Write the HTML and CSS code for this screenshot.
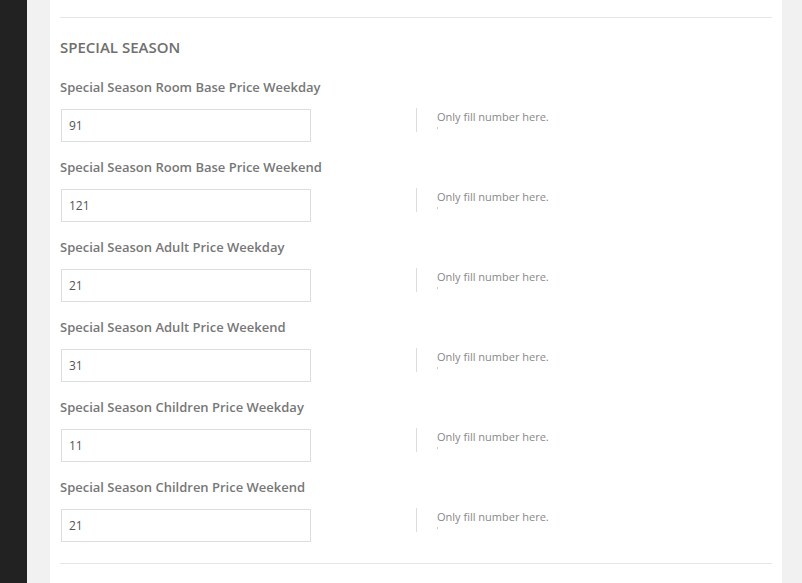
FILE: index.html
```html
<!DOCTYPE html>
<html>
<head>
<meta charset="utf-8">
<link rel="stylesheet" href="styles.css">
</head>
<body>
<div class="sidebar"></div>
<div class="main">
  <div class="panel">
    <div class="rule"></div>
    <h3 class="section-title">SPECIAL SEASON</h3>
    <div class="field">
      <label class="field-label">Special Season Room Base Price Weekday</label>
      <div class="field-row">
        <div class="field-input"><input class="text-input" type="text" value="91"></div>
        <div class="field-help"><p class="help-text">Only fill number here.</p><span class="help-tick"></span></div>
      </div>
    </div>
    <div class="field">
      <label class="field-label">Special Season Room Base Price Weekend</label>
      <div class="field-row">
        <div class="field-input"><input class="text-input" type="text" value="121"></div>
        <div class="field-help"><p class="help-text">Only fill number here.</p><span class="help-tick"></span></div>
      </div>
    </div>
    <div class="field">
      <label class="field-label">Special Season Adult Price Weekday</label>
      <div class="field-row">
        <div class="field-input"><input class="text-input" type="text" value="21"></div>
        <div class="field-help"><p class="help-text">Only fill number here.</p><span class="help-tick"></span></div>
      </div>
    </div>
    <div class="field">
      <label class="field-label">Special Season Adult Price Weekend</label>
      <div class="field-row">
        <div class="field-input"><input class="text-input" type="text" value="31"></div>
        <div class="field-help"><p class="help-text">Only fill number here.</p><span class="help-tick"></span></div>
      </div>
    </div>
    <div class="field">
      <label class="field-label">Special Season Children Price Weekday</label>
      <div class="field-row">
        <div class="field-input"><input class="text-input" type="text" value="11"></div>
        <div class="field-help"><p class="help-text">Only fill number here.</p><span class="help-tick"></span></div>
      </div>
    </div>
    <div class="field">
      <label class="field-label">Special Season Children Price Weekend</label>
      <div class="field-row">
        <div class="field-input"><input class="text-input" type="text" value="21"></div>
        <div class="field-help"><p class="help-text">Only fill number here.</p><span class="help-tick"></span></div>
      </div>
    </div>
    <div class="rule rule-bottom"></div>
  </div>
</div>
</body>
</html>
```
FILE: styles.css
```css
html, body {
  margin: 0;
  padding: 0;
  height: 100%;
  overflow: hidden;
}
body {
  display: flex;
  font-family: "Open Sans", "Noto Sans", sans-serif;
  background: #f1f1f1;
}
.sidebar {
  width: 27px;
  flex: none;
  background: #222222;
}
.main {
  flex: 1;
  padding: 0 20px 0 23px;
}
.panel {
  background: #ffffff;
  min-height: 100%;
  padding: 17px 10px 0 10px;
  box-sizing: border-box;
}
.rule {
  height: 1px;
  background: #e5e5e5;
}
.rule-bottom {
  margin-top: 21px;
}
.section-title {
  margin: 19px 0 20px 0;
  font-size: 15px;
  line-height: 20px;
  font-weight: 600;
  color: #6f6f6f;
}
.field {
  margin-bottom: 15px;
}
.field-label {
  display: block;
  font-size: 13px;
  line-height: 20px;
  font-weight: 600;
  color: #777777;
}
.field-row {
  display: flex;
  margin-top: 11px;
  align-items: flex-start;
}
.field-input {
  width: 355px;
  padding: 1px 0 0 1px;
}
.text-input {
  display: block;
  width: 250px;
  height: 33px;
  box-sizing: border-box;
  border: 1px solid #dddddd;
  padding: 0 7px;
  font-family: "Open Sans", "Noto Sans", sans-serif;
  font-size: 12px;
  color: #555555;
  outline: none;
}
.field-help {
  height: 24px;
  border-left: 1px solid #dddddd;
  padding-left: 20px;
}
.help-text {
  margin: 2px 0 0 0;
  font-size: 11px;
  line-height: 14px;
  color: #888888;
}
.help-tick {
  display: block;
  width: 1px;
  height: 2px;
  margin-top: 3px;
  background: #cccccc;
}
```
